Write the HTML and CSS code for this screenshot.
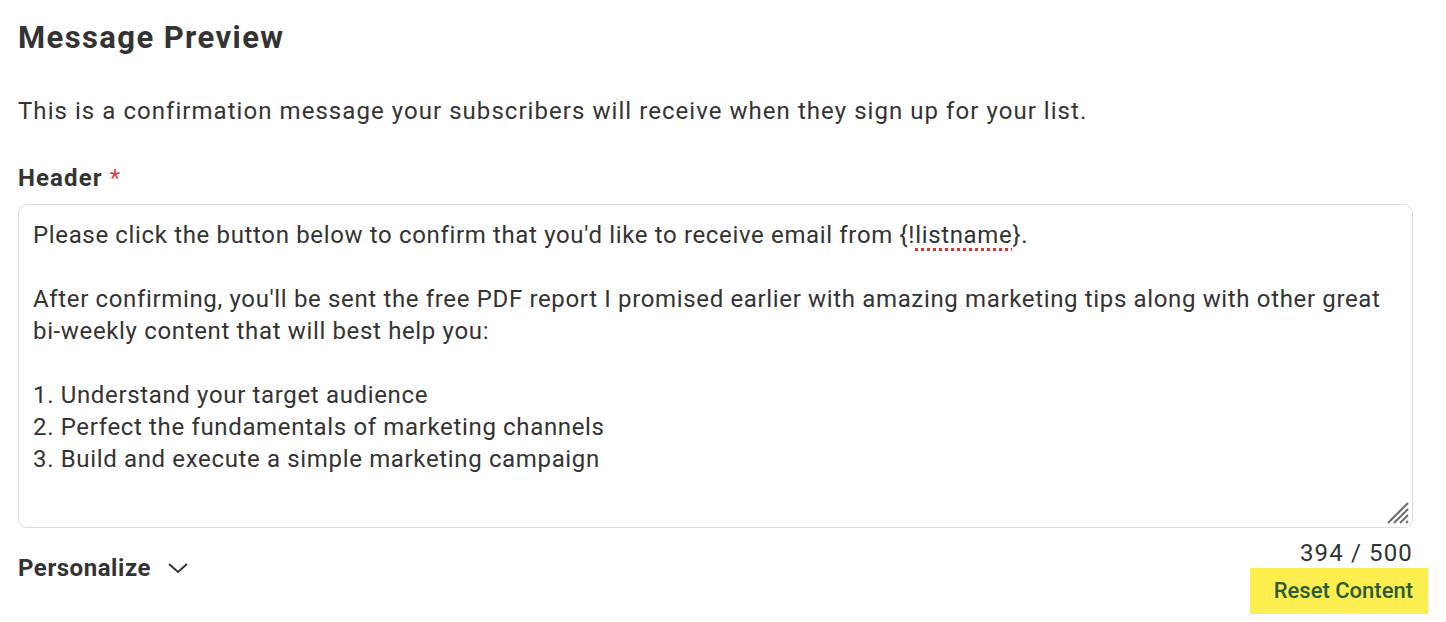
FILE: index.html
```html
<!DOCTYPE html>
<html>
<head>
<meta charset="utf-8">
<link rel="stylesheet" href="styles.css">
</head>
<body>
<div class="page">
  <h1 class="title">Message Preview</h1>
  <p class="desc">This is a confirmation message your subscribers will receive when they sign up for your list.</p>
  <div class="label">Header <span class="req">*</span></div>
  <div class="textarea">
    <div class="line">Please click the button below to confirm that you'd like to receive email from {!<span class="spell">listname</span>}.</div>
    <div class="line">&nbsp;</div>
    <div class="line">After confirming, you'll be sent the free PDF report I promised earlier with amazing marketing tips along with other great bi&#8209;weekly content that will best help you:</div>
    <div class="line">&nbsp;</div>
    <div class="line">1. Understand your target audience</div>
    <div class="line">2. Perfect the fundamentals of marketing channels</div>
    <div class="line">3. Build and execute a simple marketing campaign</div>
    <svg class="grip" width="26" height="26" viewBox="0 0 26 26">
      <line x1="24" y1="4" x2="4" y2="24" stroke="#6b6b6b" stroke-width="2"/>
      <line x1="24" y1="10" x2="10" y2="24" stroke="#6b6b6b" stroke-width="2"/>
      <line x1="24" y1="16" x2="16" y2="24" stroke="#6b6b6b" stroke-width="2"/>
      <line x1="24" y1="22" x2="22" y2="24" stroke="#6b6b6b" stroke-width="2"/>
    </svg>
  </div>
  <div class="footer">
    <div class="personalize">Personalize
      <svg class="chev" width="22" height="14" viewBox="0 0 22 14"><polyline points="2,3 11,11 20,3" fill="none" stroke="#333" stroke-width="2"/></svg>
    </div>
    <div class="right">
      <div class="count">394 / 500</div>
      <button class="reset">Reset Content</button>
    </div>
  </div>
</div>
</body>
</html>
```
FILE: styles.css
```css
html, body {
  margin: 0;
  padding: 0;
  background: #fff;
}
body {
  font-family: Roboto, "Liberation Sans", sans-serif;
  color: #333;
}
.page {
  padding: 18px 33px 0 18px;
}
.title {
  margin: 0;
  font-size: 31px;
  font-weight: 700;
  line-height: 40px;
  letter-spacing: 1.4px;
  color: #333;
}
.desc {
  margin: 37px 0 0 0;
  font-size: 24px;
  line-height: 32px;
  letter-spacing: 1.05px;
  color: #333;
}
.label {
  margin-top: 35px;
  font-size: 24px;
  font-weight: 700;
  line-height: 32px;
  letter-spacing: 1.1px;
}
.req {
  color: #d9443c;
  font-weight: 400;
}
.textarea {
  position: relative;
  margin-top: 10px;
  border: 1px solid #dcdce2;
  border-radius: 9px;
  padding: 14px 15px 0 14px;
  height: 308px;
  box-sizing: content-box;
  font-size: 24px;
  line-height: 32px;
  letter-spacing: 0.65px;
  color: #333;
}
.spell {
  text-decoration: underline dotted #e0332b;
  text-decoration-thickness: 3px;
  text-underline-offset: 5px;
}
.grip {
  position: absolute;
  right: 2px;
  bottom: 2px;
}
.footer {
  display: flex;
  justify-content: space-between;
  align-items: flex-start;
  margin-top: 10px;
}
.personalize {
  margin-top: 14px;
  font-size: 24px;
  font-weight: 700;
  line-height: 32px;
  letter-spacing: 0.55px;
  display: flex;
  align-items: center;
  gap: 16px;
}
.right {
  display: flex;
  flex-direction: column;
  align-items: flex-end;
}
.count {
  font-size: 24px;
  line-height: 30px;
  letter-spacing: 1.15px;
}
.reset {
  margin: 0 -15px 0 0;
  border: none;
  background: #fcef4e;
  color: #2e5a3a;
  font-family: Roboto, "Liberation Sans", sans-serif;
  font-size: 22px;
  font-weight: 500;
  padding: 0 15px 0 24px;
  height: 46px;
  line-height: 46px;
}
```
